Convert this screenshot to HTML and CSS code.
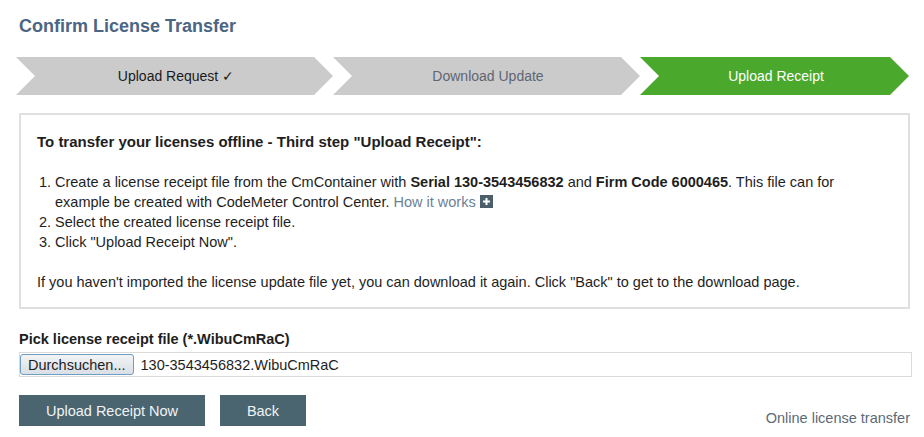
FILE: index.html
```html
<!DOCTYPE html>
<html>
<head>
<meta charset="utf-8">
<link rel="stylesheet" href="styles.css">
</head>
<body>
<div class="page">
  <h1 class="title">Confirm License Transfer</h1>
  <div class="steps">
    <div class="step step-first step-done">Upload Request ✓</div>
    <div class="step step-mid step-todo">Download Update</div>
    <div class="step step-last step-active">Upload Receipt</div>
  </div>
  <div class="info">
    <p class="info-head">To transfer your licenses offline - Third step "Upload Receipt":</p>
    <ol class="info-list">
      <li>Create a license receipt file from the CmContainer with <b>Serial 130-3543456832</b> and <b>Firm Code 6000465</b>. This file can for example be created with CodeMeter Control Center. <a class="how">How it works</a> <span class="plus"><svg width="13" height="13" viewBox="0 0 13 13"><rect width="13" height="13" fill="#4b5f6a"/><path d="M6.5 3v7M3 6.5h7" stroke="#fff" stroke-width="2"/></svg></span></li>
      <li>Select the created license receipt file.</li>
      <li>Click "Upload Receipt Now".</li>
    </ol>
    <p class="info-foot">If you haven't imported the license update file yet, you can download it again. Click "Back" to get to the download page.</p>
  </div>
  <div class="pick-label">Pick license receipt file (*.WibuCmRaC)</div>
  <div class="file-row">
    <span class="browse">Durchsuchen...</span>
    <span class="file-name">130-3543456832.WibuCmRaC</span>
  </div>
  <div class="actions">
    <button class="btn btn-upload">Upload Receipt Now</button>
    <button class="btn btn-back">Back</button>
    <a class="online">Online license transfer</a>
  </div>
</div>
</body>
</html>
```
FILE: styles.css
```css
* { box-sizing: border-box; }
html, body { margin: 0; padding: 0; background: #fff; }
body {
  font-family: "Liberation Sans", Arial, sans-serif;
  font-size: 14.5px;
  color: #1e1e1e;
}
.page {
  width: 893px;
  margin-left: 19px;
  padding-top: 15px;
}
.title {
  margin: 0;
  font-size: 18px;
  line-height: 22px;
  font-weight: bold;
  color: #4b6584;
}
.steps {
  display: flex;
  margin-top: 20px;
  margin-left: -3px;
  height: 38px;
}
.step {
  display: flex;
  align-items: center;
  justify-content: center;
  height: 38px;
  font-size: 14px;
  clip-path: polygon(0 0, calc(100% - 19px) 0, 100% 50%, calc(100% - 19px) 100%, 0 100%, 19px 50%);
}
.step-first { width: 317px; padding-left: 3px; }
.step-mid { width: 307px; padding-left: 3px; }
.step-last { width: 269px; padding-left: 3px; }
.step-done { background: #cbcbcb; color: #1b1b1b; }
.step-todo { background: #cbcbcb; color: #5f6673; }
.step-active { background: #4aa82d; color: #fff; }
.info {
  margin-top: 18px;
  width: 891px;
  border: 2px solid #e0e0e0;
  padding: 17px 16px 15px 16px;
  line-height: 20px;
}
.info-head { margin: 0; font-weight: bold; font-size: 15px; }
.info-list {
  margin: 20px 0 0 0;
  padding-left: 18px;
}
.how { color: #6c7f93; }
.plus { display: inline-block; vertical-align: -1px; line-height: 0; }
.plus svg { display: block; }
.info-foot { margin: 20px 0 0 0; }
.pick-label {
  margin-top: 21px;
  font-weight: bold;
  line-height: 18px;
}
.file-row {
  margin-top: 4px;
  height: 25px;
  width: 893px;
  border: 1px solid #dadada;
  display: flex;
  align-items: center;
}
.browse {
  height: 21px;
  padding: 0 7px;
  display: flex;
  align-items: center;
  border: 1px solid #6f9ec0;
  border-radius: 3px;
  background: linear-gradient(#f2f4f6, #d9dfe6);
  color: #1e1e1e;
}
.file-name { margin-left: 7px; }
.actions {
  margin-top: 18px;
  display: flex;
  align-items: flex-end;
}
.btn {
  height: 31px;
  border: none;
  background: #4a6470;
  color: #f0f4f5;
  font-family: "Liberation Sans", Arial, sans-serif;
  font-size: 14.5px;
  padding: 0;
}
.btn-upload { width: 186px; }
.btn-back { width: 86px; margin-left: 15px; }
.online {
  margin-left: auto;
  color: #5c6a78;
  margin-right: 2px;
  line-height: 16px;
  margin-bottom: 0;
}
```
